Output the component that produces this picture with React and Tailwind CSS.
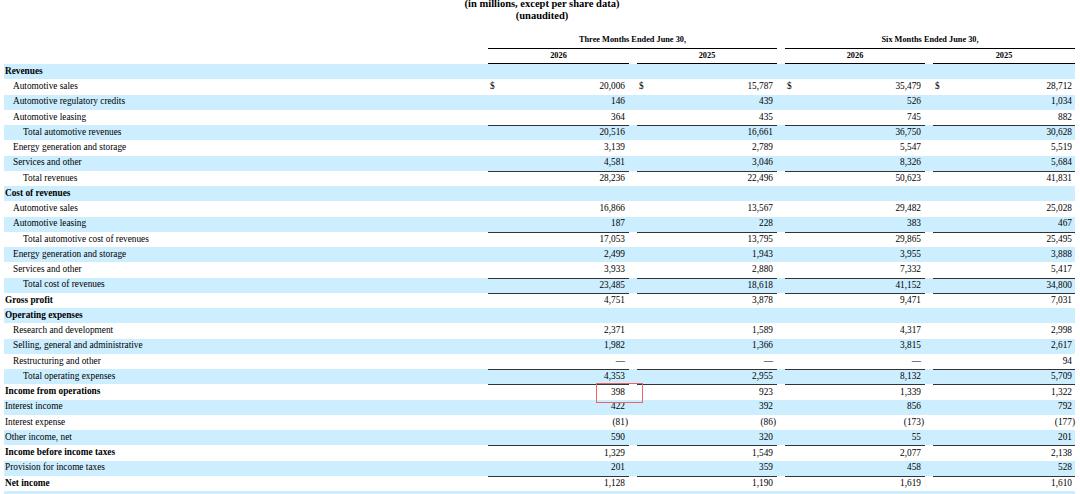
import React from "react";

const rows = [
  { label: "Revenues", bold: true },
  { label: "Automotive sales", indent: 1, vals: ["20,006", "15,787", "35,479", "28,712"], dollar: true },
  { label: "Automotive regulatory credits", indent: 1, vals: ["146", "439", "526", "1,034"] },
  { label: "Automotive leasing", indent: 1, vals: ["364", "435", "745", "882"] },
  { label: "Total automotive revenues", indent: 2, vals: ["20,516", "16,661", "36,750", "30,628"], top: true },
  { label: "Energy generation and storage", indent: 1, vals: ["3,139", "2,789", "5,547", "5,519"] },
  { label: "Services and other", indent: 1, vals: ["4,581", "3,046", "8,326", "5,684"] },
  { label: "Total revenues", indent: 2, vals: ["28,236", "22,496", "50,623", "41,831"], top: true },
  { label: "Cost of revenues", bold: true },
  { label: "Automotive sales", indent: 1, vals: ["16,866", "13,567", "29,482", "25,028"] },
  { label: "Automotive leasing", indent: 1, vals: ["187", "228", "383", "467"] },
  { label: "Total automotive cost of revenues", indent: 2, vals: ["17,053", "13,795", "29,865", "25,495"], top: true },
  { label: "Energy generation and storage", indent: 1, vals: ["2,499", "1,943", "3,955", "3,888"] },
  { label: "Services and other", indent: 1, vals: ["3,933", "2,880", "7,332", "5,417"] },
  { label: "Total cost of revenues", indent: 2, vals: ["23,485", "18,618", "41,152", "34,800"], top: true },
  { label: "Gross profit", bold: true, vals: ["4,751", "3,878", "9,471", "7,031"], top: true },
  { label: "Operating expenses", bold: true },
  { label: "Research and development", indent: 1, vals: ["2,371", "1,589", "4,317", "2,998"] },
  { label: "Selling, general and administrative", indent: 1, vals: ["1,982", "1,366", "3,815", "2,617"] },
  { label: "Restructuring and other", indent: 1, vals: ["—", "—", "—", "94"] },
  { label: "Total operating expenses", indent: 2, vals: ["4,353", "2,955", "8,132", "5,709"], top: true },
  { label: "Income from operations", bold: true, vals: ["398", "923", "1,339", "1,322"], top: true },
  { label: "Interest income", vals: ["422", "392", "856", "792"] },
  { label: "Interest expense", vals: ["(81)", "(86)", "(173)", "(177)"] },
  { label: "Other income, net", vals: ["590", "320", "55", "201"] },
  { label: "Income before income taxes", bold: true, vals: ["1,329", "1,549", "2,077", "2,138"], top: true },
  { label: "Provision for income taxes", vals: ["201", "359", "458", "528"] },
  { label: "Net income", bold: true, vals: ["1,128", "1,190", "1,619", "1,610"], top: true },
];

const cellW = ["w-[141px]", "w-[140px]", "w-[140px]", "w-[142px]"];

function Value({ v }) {
  if (v && v.startsWith("(")) {
    return (
      <span>
        {v.slice(0, -1)}
        <span className="-mr-[3px]">)</span>
      </span>
    );
  }
  return <span>{v}</span>;
}

function Row({ r, i }) {
  const blue = i % 2 === 0;
  const indent = r.indent === 2 ? "pl-[19px]" : r.indent === 1 ? "pl-[9px]" : "pl-[1px]";
  return (
    <div className={`flex h-[15.25px] ${blue ? "bg-[#cceeff]" : "bg-white"}`}>
      <div className={`w-[484px] flex items-center ${indent} ${r.bold ? "font-bold" : ""}`}>
        {r.label}
      </div>
      <div className="flex gap-[8px]">
        {[0, 1, 2, 3].map((c) => (
          <div
            key={c}
            className={`${cellW[c]} h-full flex items-center justify-between pl-[2px] ${c === 3 ? "pr-[3px]" : "pr-[4px]"} ${
              r.top ? "border-t border-[#333]" : ""
            }`}
          >
            <span>{r.dollar ? "$" : ""}</span>
            {r.vals ? <Value v={r.vals[c]} /> : <span />}
          </div>
        ))}
      </div>
    </div>
  );
}

export default function App() {
  return (
    <div
      className="relative w-[1080px] h-[494px] overflow-hidden bg-white text-black text-[9.3px] leading-none"
      style={{ fontFamily: '"Liberation Serif", "Times New Roman", serif' }}
    >
      <div className="h-[33px] pl-[4px] flex flex-col">
        <div className="-mt-[2px] text-center font-bold text-[10.5px] leading-[11.5px]">
          <div>(in millions, except per share data)</div>
          <div>(unaudited)</div>
        </div>
      </div>
      <div className="flex h-[16px] pl-[4px] font-bold text-[8.3px]">
        <div className="w-[484px]" />
        <div className="w-[289px] border-b border-black flex items-center justify-center">
          Three Months Ended June 30,
        </div>
        <div className="w-[8px]" />
        <div className="w-[290px] border-b border-black flex items-center justify-center">
          Six Months Ended June 30,
        </div>
      </div>
      <div className="flex h-[15px] pl-[4px] font-bold text-[8.3px]">
        <div className="w-[484px]" />
        <div className="flex gap-[8px]">
          {["2026", "2025", "2026", "2025"].map((y, c) => (
            <div key={c} className={`${cellW[c]} border-b border-black flex items-center justify-center`}>
              {y}
            </div>
          ))}
        </div>
      </div>
      <div className="pl-[4px] pr-[5px]">
        {rows.map((r, i) => (
          <Row key={i} r={r} i={i} />
        ))}
        <div className="h-[15.25px] bg-[#cceeff]" />
      </div>
      <div className="absolute left-[596px] top-[383px] w-[47px] h-[20px] border-[1.5px] border-[#ec6464]" />
    </div>
  );
}
